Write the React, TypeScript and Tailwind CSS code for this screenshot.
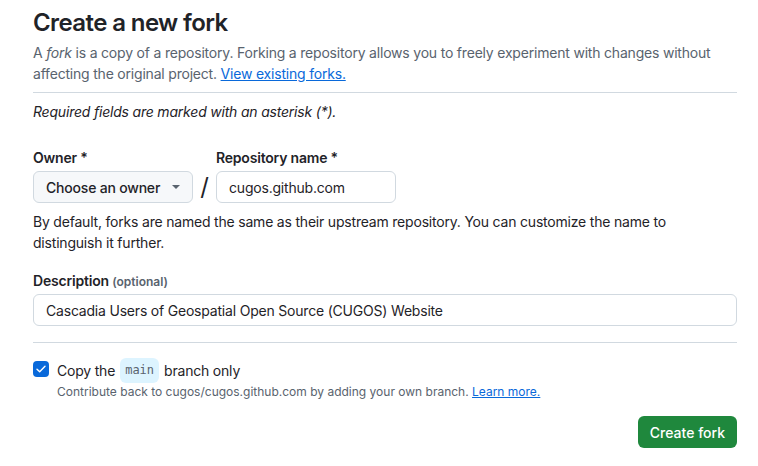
const FONT = { fontFamily: "Inter, 'Liberation Sans', sans-serif" };

export default function App() {
  return (
    <div className="w-[758px] h-[466px] bg-white text-[#1f2328] overflow-hidden tracking-[-0.2px]" style={FONT}>
      <div className="ml-[33px] w-[704px] pt-[8px]">
        {/* Header */}
        <h1 className="text-[24px] leading-[30px] font-semibold tracking-[-0.025em]">Create a new fork</h1>
        <p className="mt-[4px] text-[14px] leading-[21px] text-[#59636e]">
          A <em>fork</em> is a copy of a repository. Forking a repository allows you to freely experiment with changes without
          affecting the original project.{" "}
          <a href="#forks" className="text-[#0969da] underline">View existing forks.</a>
        </p>
        <div className="mt-[8px] border-t border-[#d1d9e0]" />

        <p className="mt-[8px] text-[14px] leading-[21px] italic">Required fields are marked with an asterisk (*).</p>

        {/* Owner / repo */}
        <div className="mt-[25px] flex items-end">
          <div>
            <div className="text-[14px] leading-[21px] font-semibold">Owner *</div>
            <button className="mt-[3px] h-[32px] w-[160px] flex items-center justify-between pl-[12px] pr-[12px] rounded-[6px] border border-[#d1d9e0] bg-[#f6f8fa] text-[14px] font-medium">
              <span>Choose an owner</span>
              <svg width="8" height="4" viewBox="0 0 8 4" className="fill-[#59636e]">
                <path d="M0 0h8L4 4z" />
              </svg>
            </button>
          </div>
          <div className="w-[23px] h-[32px] flex items-center justify-center text-[24px] leading-none">/</div>
          <div>
            <div className="text-[14px] leading-[21px] font-semibold">Repository name *</div>
            <div className="mt-[3px] h-[32px] w-[180px] flex items-center px-[12px] rounded-[6px] border border-[#d1d9e0] text-[14px]">
              cugos.github.com
            </div>
          </div>
        </div>
        <p className="mt-[8px] text-[14px] leading-[21px]">
          By default, forks are named the same as their upstream repository. You can customize the name to
          distinguish it further.
        </p>

        {/* Description */}
        <div className="mt-[17px] text-[14px] leading-[21px] font-semibold">
          Description <span className="text-[12px] tracking-normal text-[#59636e]">(optional)</span>
        </div>
        <div className="mt-[2px] h-[32px] flex items-center px-[12px] rounded-[6px] border border-[#d1d9e0] text-[14px]">
          Cascadia Users of Geospatial Open Source (CUGOS) Website
        </div>
        <div className="mt-[16px] border-t border-[#d1d9e0]" />

        {/* Checkbox */}
        <div className="mt-[15px] flex items-start">
          <div className="mt-[3px] w-[16px] h-[16px] rounded-[4px] bg-[#0969da] flex items-center justify-center">
            <svg width="10" height="8" viewBox="0 0 10 8" fill="none">
              <path d="M1 4.2 3.7 6.8 9 1.2" stroke="white" strokeWidth="1.4" strokeLinecap="round" strokeLinejoin="round" />
            </svg>
          </div>
          <div className="ml-[8px]">
            <div className="text-[14px] leading-[21px] flex items-center">
              <span>Copy the</span>
              <code className="mx-[5px] px-[5px] py-[2px] rounded-[6px] bg-[#ddf4ff] text-[12px] tracking-normal text-[#59636e]" style={{ fontFamily: "'DejaVu Sans Mono', 'Liberation Mono', monospace" }}>main</code>
              <span>branch only</span>
            </div>
            <div className="text-[12px] leading-[18px] tracking-normal text-[#59636e]">
              Contribute back to cugos/cugos.github.com by adding your own branch.{" "}
              <a href="#learn" className="text-[#0969da] underline">Learn more.</a>
            </div>
          </div>
        </div>

        {/* Submit */}
        <div className="mt-[15px] flex justify-end">
          <button className="h-[32px] px-[12px] rounded-[6px] bg-[#1f883d] text-white text-[14px] tracking-normal font-medium">
            Create fork
          </button>
        </div>
      </div>
    </div>
  );
}
